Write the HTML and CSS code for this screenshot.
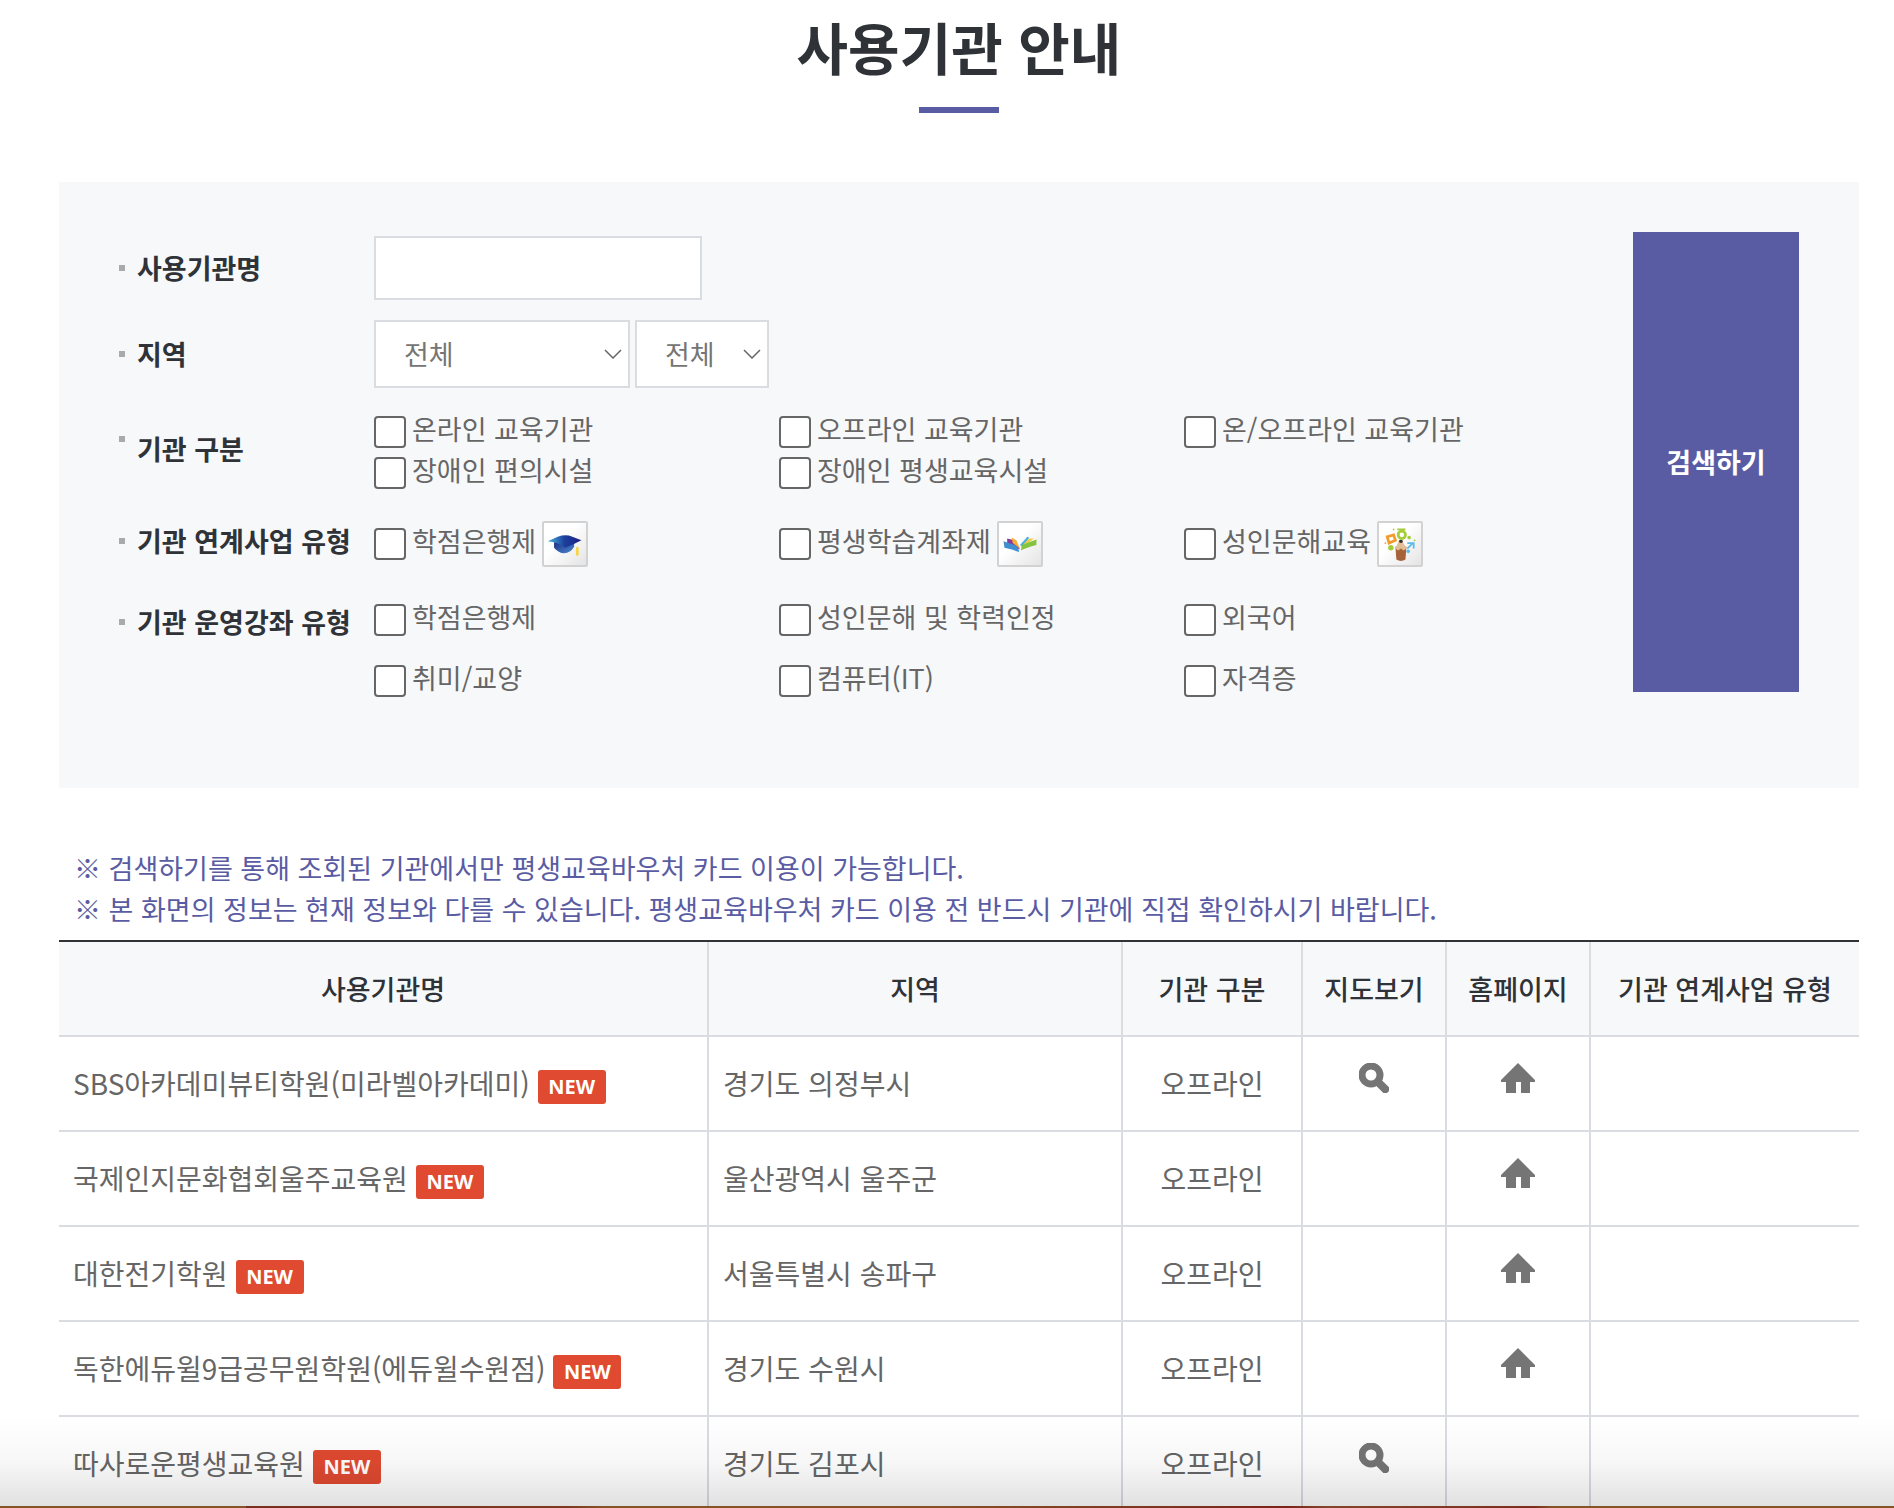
FILE: index.html
```html
<!DOCTYPE html>
<html lang="ko">
<head>
<meta charset="utf-8">
<meta name="viewport" content="width=device-width, initial-scale=1">
<title>사용기관 안내</title>
<link rel="stylesheet" href="styles.css">
</head>
<body>
<svg class="defs" aria-hidden="true">
  <symbol id="icon-search" viewBox="0 0 30 30">
    <circle cx="12" cy="12" r="9" fill="none" stroke="#757575" stroke-width="7"/>
    <path d="M18 18l11 11" stroke="#757575" stroke-width="8"/>
  </symbol>
  <symbol id="icon-home" viewBox="0 0 34 30">
    <path d="M17 0L34 17v2h-5v11h-9V19h-5v11H5V19H0v-2z" fill="#757575"/>
  </symbol>
</svg>
<main class="page">
  <h1 class="title">사용기관 안내</h1>

  <form class="search">
    <div class="fields">
      <div class="row">
        <label class="label" for="name">사용기관명</label>
        <div class="controls"><input class="text" id="name" type="text"></div>
      </div>
      <div class="row">
        <label class="label" for="region">지역</label>
        <div class="controls">
          <select class="select select-wide" id="region"><option>전체</option></select>
          <select class="select" aria-label="시군구"><option>전체</option></select>
        </div>
      </div>
      <div class="row" role="group" aria-labelledby="kind">
        <span class="label label-top" id="kind">기관 구분</span>
        <div class="checks">
          <label class="check"><input type="checkbox">온라인 교육기관</label>
          <label class="check"><input type="checkbox">오프라인 교육기관</label>
          <label class="check"><input type="checkbox">온/오프라인 교육기관</label>
          <label class="check"><input type="checkbox">장애인 편의시설</label>
          <label class="check"><input type="checkbox">장애인 평생교육시설</label>
        </div>
      </div>
      <div class="row" role="group" aria-labelledby="link">
        <span class="label" id="link">기관 연계사업 유형</span>
        <div class="checks checks-icons">
          <label class="check"><input type="checkbox">학점은행제
            <svg class="badge" viewBox="0 0 46 46" aria-hidden="true">
              <defs>
                <linearGradient id="cap-top"><stop offset="0" stop-color="#49b4dc"/><stop offset=".5" stop-color="#1c3f9c"/><stop offset="1" stop-color="#1c1f86"/></linearGradient>
                <linearGradient id="cap-base" y2="1"><stop offset="0" stop-color="#1c2f86"/><stop offset="1" stop-color="#4c8ad0"/></linearGradient>
              </defs>
              <path d="M11 21v6q5 6 11 6q7 0 11-7v-5z" fill="url(#cap-base)"/>
              <path d="M4 20l11-5q9-3 16 0l10 4q-9 5-18 8q-8-6-19-7z" fill="url(#cap-top)"/>
              <path d="M35 27q2-2 3 0v8q-2 2-3 0z" fill="#f7d54a"/>
            </svg>
          </label>
          <label class="check"><input type="checkbox">평생학습계좌제
            <svg class="badge" viewBox="0 0 46 46" aria-hidden="true">
              <path d="M9 17l8 2 6 10-14-6z" fill="#8a3a98"/>
              <path d="M14 16l5 3 4 9-8-6z" fill="#f3b13a"/>
              <path d="M23 24l8-9 2 1-6 11z" fill="#49b2e4"/>
              <path d="M27 23l6-6h5l-10 9z" fill="#f0cf45"/>
              <path d="M5 20l12 4q4 1 5 8q-6-3-16-5z" fill="#3e8ed0"/>
              <path d="M25 24l16-6v6q-11 3-17 6z" fill="#84c441"/>
            </svg>
          </label>
          <label class="check"><input type="checkbox">성인문해교육
            <svg class="badge" viewBox="0 0 46 46" aria-hidden="true">
              <path d="M18 26h12l-1 14q-5 3-10 0z" fill="#a6633a"/>
              <path d="M18 28l4-9h3l5 9-3 2-3-2-3 2z" fill="#e2be94"/>
              <circle cx="24" cy="20" r="2" fill="#333"/>
              <circle cx="25" cy="13" r="4" fill="none" stroke="#a5cd39" stroke-width="3"/>
              <path d="M20 7h9" stroke="#a5cd39" stroke-width="2"/>
              <path d="M9 15l7-2 2 6-7 3z" fill="none" stroke="#f39a2d" stroke-width="3"/>
              <path d="M31 22h7v6M37 22l-6 6" fill="none" stroke="#5bbbea" stroke-width="2"/>
              <circle cx="32" cy="31" r="2" fill="#5bbbea"/>
              <circle cx="13" cy="27" r="3" fill="#a5cd39"/>
              <circle cx="33" cy="16" r="2" fill="#a5cd39"/>
              <circle cx="39" cy="19" r="1" fill="#a5cd39"/>
              <circle cx="16" cy="7" r="1" fill="#a5cd39"/>
              <circle cx="7" cy="22" r="1" fill="#f39a2d"/>
            </svg>
          </label>
        </div>
      </div>
      <div class="row row-start" role="group" aria-labelledby="course">
        <span class="label" id="course">기관 운영강좌 유형</span>
        <div class="checks checks-loose">
          <label class="check"><input type="checkbox">학점은행제</label>
          <label class="check"><input type="checkbox">성인문해 및 학력인정</label>
          <label class="check"><input type="checkbox">외국어</label>
          <label class="check"><input type="checkbox">취미/교양</label>
          <label class="check"><input type="checkbox">컴퓨터(IT)</label>
          <label class="check"><input type="checkbox">자격증</label>
        </div>
      </div>
    </div>
    <button class="submit" type="button">검색하기</button>
  </form>

  <div class="notes">
    <p>※ 검색하기를 통해 조회된 기관에서만 평생교육바우처 카드 이용이 가능합니다.</p>
    <p>※ 본 화면의 정보는 현재 정보와 다를 수 있습니다. 평생교육바우처 카드 이용 전 반드시 기관에 직접 확인하시기 바랍니다.</p>
  </div>

  <table class="list">
    <colgroup>
      <col class="col-name"><col class="col-region"><col class="col-kind"><col class="col-icon"><col class="col-icon"><col>
    </colgroup>
    <thead>
      <tr><th>사용기관명</th><th>지역</th><th>기관 구분</th><th>지도보기</th><th>홈페이지</th><th>기관 연계사업 유형</th></tr>
    </thead>
    <tbody>
      <tr>
        <td><span class="name">SBS아카데미뷰티학원(미라벨아카데미)<span class="new">NEW</span></span></td>
        <td>경기도 의정부시</td><td class="mid">오프라인</td>
        <td class="icon"><a href="#" aria-label="지도보기"><svg width="30" height="30"><use href="#icon-search"/></svg></a></td>
        <td class="icon"><a href="#" aria-label="홈페이지"><svg width="34" height="30"><use href="#icon-home"/></svg></a></td>
        <td></td>
      </tr>
      <tr>
        <td><span class="name">국제인지문화협회울주교육원<span class="new">NEW</span></span></td>
        <td>울산광역시 울주군</td><td class="mid">오프라인</td>
        <td class="icon"></td>
        <td class="icon"><a href="#" aria-label="홈페이지"><svg width="34" height="30"><use href="#icon-home"/></svg></a></td>
        <td></td>
      </tr>
      <tr>
        <td><span class="name">대한전기학원<span class="new">NEW</span></span></td>
        <td>서울특별시 송파구</td><td class="mid">오프라인</td>
        <td class="icon"></td>
        <td class="icon"><a href="#" aria-label="홈페이지"><svg width="34" height="30"><use href="#icon-home"/></svg></a></td>
        <td></td>
      </tr>
      <tr>
        <td><span class="name">독한에듀윌9급공무원학원(에듀윌수원점)<span class="new">NEW</span></span></td>
        <td>경기도 수원시</td><td class="mid">오프라인</td>
        <td class="icon"></td>
        <td class="icon"><a href="#" aria-label="홈페이지"><svg width="34" height="30"><use href="#icon-home"/></svg></a></td>
        <td></td>
      </tr>
      <tr>
        <td><span class="name">따사로운평생교육원<span class="new">NEW</span></span></td>
        <td>경기도 김포시</td><td class="mid">오프라인</td>
        <td class="icon"><a href="#" aria-label="지도보기"><svg width="30" height="30"><use href="#icon-search"/></svg></a></td>
        <td class="icon"></td>
        <td></td>
      </tr>
    </tbody>
  </table>
</main>
<div class="shade"></div>
</body>
</html>
```
FILE: styles.css
```css
* { box-sizing: border-box; }

body {
  margin: 0;
  height: 100vh;
  overflow: hidden;
  background: #fff;
  color: #666;
  font-family: "Noto Sans CJK KR", "Noto Sans", sans-serif;
  font-size: 27px;
}

.defs { position: absolute; width: 0; height: 0; }

.page { padding: 0 35px 0 59px; }

.title {
  margin: 0;
  color: #2f3337;
  font-size: 56px;
  font-weight: 700;
  line-height: 92px;
  text-align: center;
}

.title::after {
  content: "";
  display: block;
  width: 80px;
  height: 6px;
  margin: 15px auto 69px;
  background: #5a5ca3;
}

/* search panel */
.search {
  display: flex;
  align-items: flex-start;
  gap: 44px;
  padding: 50px 60px 86px;
  background: #f7f8fa;
}

.fields {
  flex: 1;
  display: flex;
  flex-direction: column;
  gap: 20px;
  padding-top: 4px;
}

.row { display: flex; align-items: center; }
.row-start { align-items: flex-start; }
.row-start .label { min-height: 61px; }

.label {
  flex: none;
  display: flex;
  align-items: center;
  gap: 12px;
  width: 255px;
  color: #2f3337;
  font-weight: 700;
  line-height: 26px;
  white-space: nowrap;
}

.label::before {
  content: "";
  width: 6px;
  height: 6px;
  background: #aaa;
}

.label-top { align-items: flex-start; }

.controls { display: flex; gap: 5px; }

.text,
.select {
  border: 2px solid #d9dce1;
  border-radius: 0;
  background-color: #fff;
  color: #757575;
  font: inherit;
}

.text { width: 328px; height: 64px; padding: 0 28px; }

.select {
  appearance: none;
  width: 134px;
  height: 68px;
  padding: 0 28px 2px;
  background-image: url("data:image/svg+xml,%3Csvg xmlns='http://www.w3.org/2000/svg' width='18' height='10'%3E%3Cpath d='M1 1l8 8 8-8' fill='none' stroke='%23666' stroke-width='1.5'/%3E%3C/svg%3E");
  background-position: right 6px center;
  background-repeat: no-repeat;
}

.select-wide { width: 256px; }

.checks {
  flex: 1;
  display: grid;
  grid-template-columns: repeat(3, 1fr);
  grid-auto-rows: 41px;
}

.checks-icons { grid-auto-rows: 61px; }
.checks-loose { grid-auto-rows: 50px; row-gap: 11px; }

.check {
  display: flex;
  align-items: center;
  gap: 6px;
  white-space: nowrap;
}

.check input {
  appearance: none;
  width: 32px;
  height: 32px;
  margin: 7px 0 0;
  border: 2px solid #666;
  border-radius: 4px;
  background: #fff;
}

.badge {
  width: 46px;
  height: 46px;
  margin-top: 7px;
  border: 2px solid #d2d2d2;
  border-radius: 2px;
  background: linear-gradient(135deg, #fff 40%, #e4e4e4);
}

.submit {
  width: 166px;
  height: 460px;
  padding: 0 0 2px;
  border: 0;
  background: #5a5ca3;
  color: #fff;
  font: inherit;
  font-weight: 700;
}

.notes {
  padding: 59px 15px 11px;
  color: #5a5ca3;
  line-height: 41px;
}

.notes p { margin: 0; }

/* institution list */
.list {
  width: 100%;
  table-layout: fixed;
  border-top: 2px solid #2f3337;
  border-spacing: 0;
  font-size: 28px;
}

.col-name { width: 36%; }
.col-region { width: 23%; }
.col-kind { width: 10%; }
.col-icon { width: 8%; }

.list th,
.list td {
  height: 95px;
  padding: 0 14px 2px;
  border-bottom: 2px solid #d9dce1;
  text-align: left;
  white-space: nowrap;
}

.list th + th,
.list td + td { border-left: 2px solid #d9dce1; }

.list th {
  padding: 0;
  background: #f7f8fa;
  color: #2f3337;
  font-size: 27px;
  font-weight: 500;
  text-align: center;
}

.list .mid { text-align: center; }
.list .icon { padding: 0 0 12px; text-align: center; }
.icon svg { display: block; margin: 0 auto; }

.name { display: flex; align-items: center; gap: 8px; }

.new {
  width: 68px;
  height: 34px;
  margin-top: 8px;
  border-radius: 3px;
  background: #e04a31;
  color: #fff;
  font-family: "Noto Sans", sans-serif;
  font-size: 20px;
  font-weight: 700;
  line-height: 34px;
  text-align: center;
}

/* bottom edge shading over the list */
.shade {
  position: fixed;
  right: 0;
  bottom: 0;
  left: 0;
  height: 92px;
  background:
    linear-gradient(90deg, #84552a 13%, #7a2e1c 13%, #7d3a20 30%, #84552a 32%, #84502a 50%, #7a2418 68%, #84452a 70%, #7d2e1c 81%, #84552a 82%) bottom / 100% 2px no-repeat,
    linear-gradient(rgba(0, 0, 0, 0), rgba(0, 0, 0, 0.03) 50%, rgba(0, 0, 0, 0.12));
  pointer-events: none;
}
```
